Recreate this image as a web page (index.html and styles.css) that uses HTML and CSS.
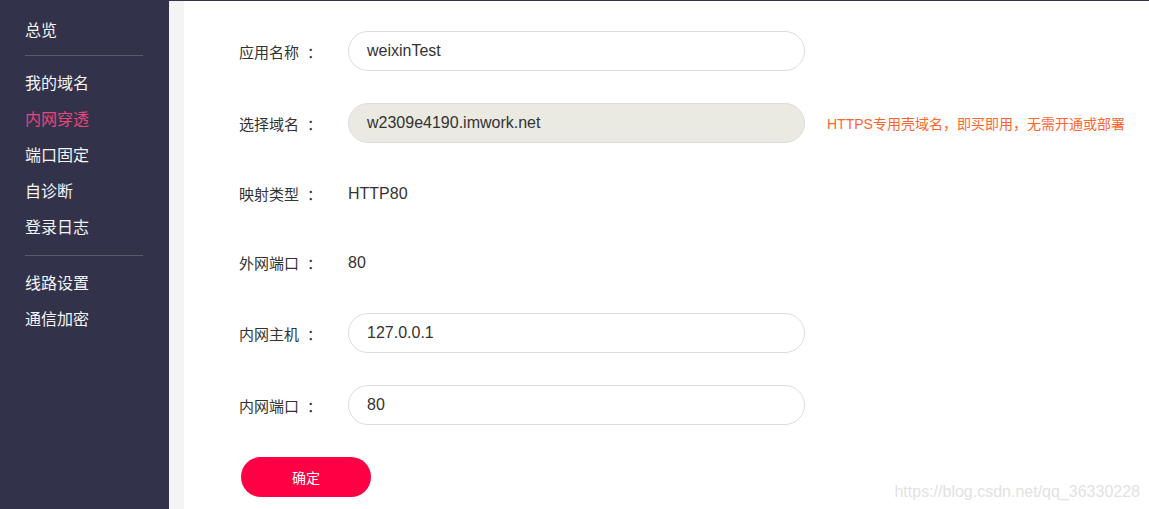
FILE: index.html
```html
<!DOCTYPE html>
<html lang="zh-CN">
<head>
<meta charset="utf-8">
<title>内网穿透</title>
<link rel="stylesheet" href="styles.css">
</head>
<body>
<div class="layout">
  <aside class="sidebar">
    <ul class="menu">
      <li class="menu-item">总览</li>
      <li class="menu-divider"></li>
      <li class="menu-item">我的域名</li>
      <li class="menu-item active">内网穿透</li>
      <li class="menu-item">端口固定</li>
      <li class="menu-item">自诊断</li>
      <li class="menu-item">登录日志</li>
      <li class="menu-divider second"></li>
      <li class="menu-item">线路设置</li>
      <li class="menu-item">通信加密</li>
    </ul>
  </aside>
  <div class="strip"></div>
  <main class="content">
    <form class="form">
      <div class="row">
        <label class="label">应用名称<span class="colon">：</span></label>
        <div class="input">weixinTest</div>
      </div>
      <div class="row">
        <label class="label">选择域名<span class="colon">：</span></label>
        <div class="input disabled">w2309e4190.imwork.net</div>
        <span class="hint">HTTPS专用壳域名，即买即用，无需开通或部署</span>
      </div>
      <div class="row text-row">
        <label class="label">映射类型<span class="colon">：</span></label>
        <span class="value">HTTP80</span>
      </div>
      <div class="row text-row">
        <label class="label">外网端口<span class="colon">：</span></label>
        <span class="value">80</span>
      </div>
      <div class="row">
        <label class="label">内网主机<span class="colon">：</span></label>
        <div class="input">127.0.0.1</div>
      </div>
      <div class="row">
        <label class="label">内网端口<span class="colon">：</span></label>
        <div class="input">80</div>
      </div>
      <div class="actions">
        <button type="button" class="btn">确定</button>
      </div>
    </form>
    <div class="watermark">https://blog.csdn.net/qq_36330228</div>
  </main>
</div>
</body>
</html>
```

FILE: styles.css
```css
* { box-sizing: border-box; }
html, body { margin: 0; padding: 0; }
body {
  font-family: "Liberation Sans", Arial, "Noto Sans CJK SC", sans-serif;
  background: #fff;
  color: #333;
  border-top: 1px solid #33334a;
  height: 509px;
  overflow: hidden;
}
.layout {
  display: flex;
  height: 508px;
}
.sidebar {
  width: 169px;
  flex-shrink: 0;
  background: #32324a;
  padding: 10px 26px 0 25px;
}
.menu {
  list-style: none;
  margin: 0;
  padding: 0;
}
.menu-item {
  font-size: 16px;
  line-height: 36px;
  height: 36px;
  color: #f4f4f4;
  font-family: "Noto Sans CJK SC", sans-serif;
}
.menu-item.active { color: #e8457b; }
.menu-divider {
  height: 1px;
  background: #5a5a6e;
  margin: 8px 0 8px;
}
.menu-divider.second { margin-top: 11px; }
.strip {
  width: 15px;
  flex-shrink: 0;
  background: #f4f4f4;
}
.content {
  flex: 1;
  position: relative;
  padding: 30px 0 0 55px;
}
.form {
  display: flex;
  flex-direction: column;
}
.row {
  display: flex;
  align-items: center;
  height: 40px;
  margin-bottom: 32px;
}
.row.text-row { height: 37px; }
.label {
  width: 109px;
  flex-shrink: 0;
  font-size: 15px;
  color: #333;
  font-family: "Noto Sans CJK SC", sans-serif;
}
.colon {
  margin-left: 8px;
}
.input {
  width: 457px;
  height: 40px;
  border: 1px solid #dcdcdc;
  border-radius: 20px;
  padding: 0 18px;
  display: flex;
  align-items: center;
  font-size: 16px;
  color: #333;
  background: #fff;
}
.input.disabled { background: #eae9e2; }
.value {
  font-size: 16px;
  color: #333;
}
.hint {
  margin-left: 22px;
  font-size: 14px;
  color: #ff6530;
  font-family: "Liberation Sans", "Noto Sans CJK SC", sans-serif;
}
.actions {
  display: flex;
  padding-left: 2px;
}
.btn {
  width: 130px;
  height: 40px;
  border: none;
  border-radius: 20px;
  background: #ff0044;
  color: #fff;
  font-size: 14px;
  font-family: "Noto Sans CJK SC", sans-serif;
  cursor: pointer;
}
.watermark {
  position: absolute;
  right: 9px;
  bottom: 8px;
  font-size: 16px;
  color: #e2e2e2;
}
```
